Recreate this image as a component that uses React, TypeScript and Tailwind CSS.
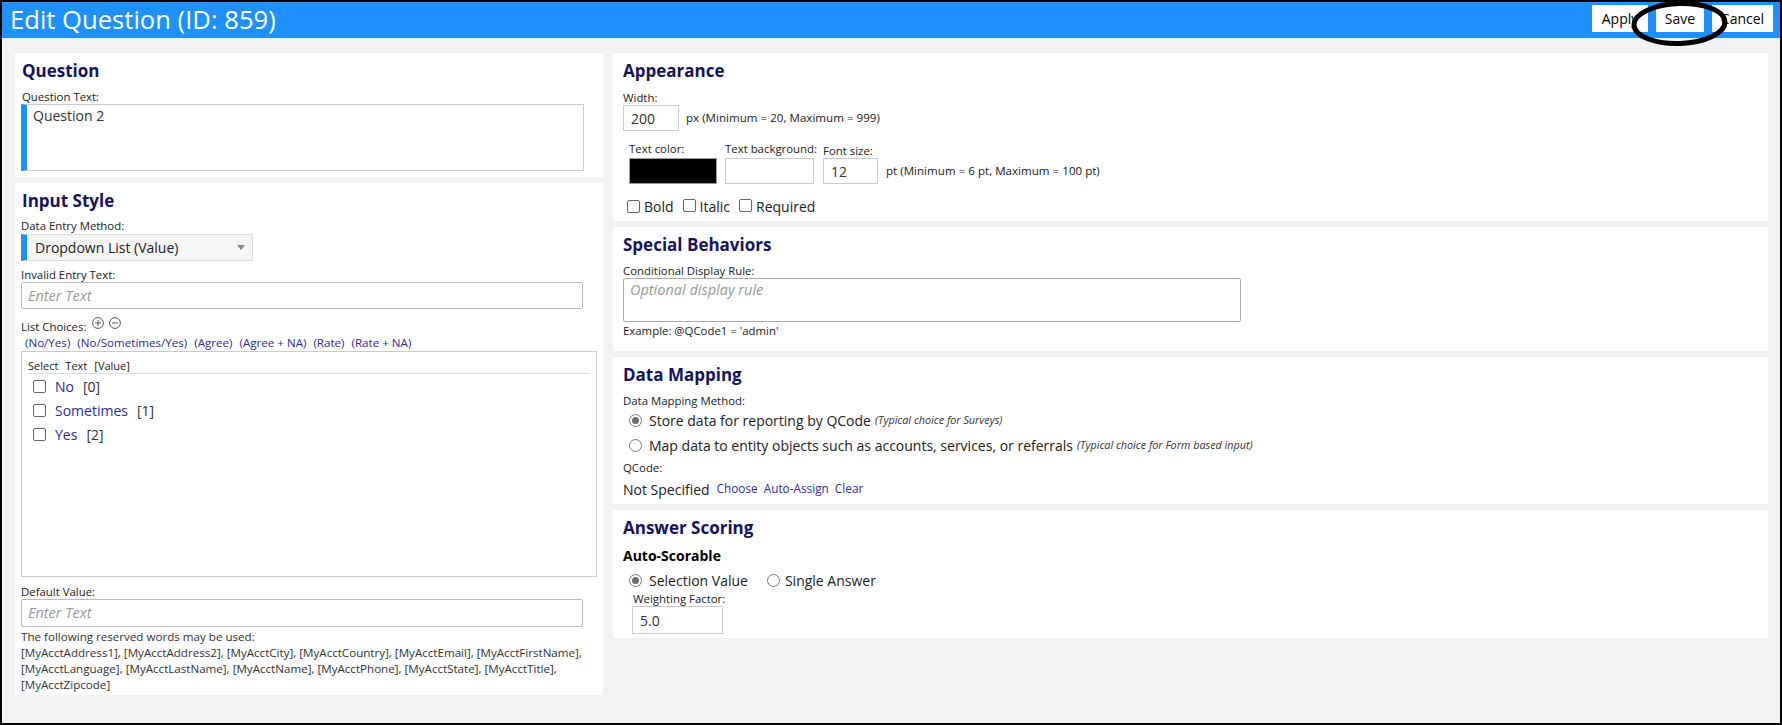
import React from "react";

const Label = ({ children, className = "" }: { children: React.ReactNode; className?: string }) => (
  <div className={`text-[11.4px] leading-[14px] text-[#222] whitespace-nowrap ${className}`}>{children}</div>
);

const Heading = ({ children }: { children: React.ReactNode }) => (
  <h2 className="text-[17px] leading-[24px] font-bold text-[#14135e]">{children}</h2>
);

const Checkbox = () => (
  <span className="inline-block w-[13px] h-[13px] shrink-0 border border-[#666] rounded-[2px] bg-white" />
);

const Radio = ({ checked = false }: { checked?: boolean }) => (
  <span className="w-[13px] h-[13px] shrink-0 rounded-full border border-[#7a7a7a] bg-white flex items-center justify-center">
    {checked && <span className="w-[7px] h-[7px] rounded-full bg-[#6f6f6f]" />}
  </span>
);

const CircleIcon = ({ plus }: { plus?: boolean }) => (
  <svg width="12" height="12" viewBox="0 0 12 12" className="shrink-0">
    <circle cx="6" cy="6" r="5.4" fill="none" stroke="#555" strokeWidth="1" />
    <line x1="3" y1="6" x2="9" y2="6" stroke="#555" strokeWidth="1" />
    {plus && <line x1="6" y1="3" x2="6" y2="9" stroke="#555" strokeWidth="1" />}
  </svg>
);

export default function App() {
  return (
    <div className="relative w-[1782px] h-[725px] border-2 border-black bg-[#f2f2f2] font-['Open_Sans',sans-serif] overflow-hidden flex flex-col">
      {/* Header */}
      <header className="h-[36px] shrink-0 bg-[#1e90ff] flex justify-between">
        <div className="pl-[8px] text-white text-[25.6px] leading-[36px]">Edit Question (ID: 859)</div>
        <div className="flex gap-[8px] pt-[3px] pr-[7px]">
          <button className="w-[56px] h-[27px] bg-white text-[14px] text-black">Apply</button>
          <button className="w-[48px] h-[27px] bg-white text-[14px] text-black">Save</button>
          <button className="w-[61px] h-[27px] bg-white text-[14px] text-black">Cancel</button>
        </div>
      </header>

      {/* Body */}
      <div className="flex gap-[10px] pl-[13px] pt-[15px]">
        {/* Left column */}
        <div className="w-[588px] flex flex-col gap-[6px]">
          <section className="bg-white pl-[6px] pt-[6px] pb-[6px]">
            <div className="pl-[1px]">
              <Heading>Question</Heading>
            </div>
            <Label className="mt-[7px] pl-[1px]">Question Text:</Label>
            <div className="w-[563px] h-[67px] border border-[#ccc] border-l-[6px] border-l-[#1e90ff] pl-[6px] pt-[1px] text-[14px] leading-[20px] text-[#333]">
              Question 2
            </div>
          </section>

          <section className="bg-white pl-[6px] pt-[6px] pb-[2px]">
            <div className="pl-[1px]">
              <Heading>Input Style</Heading>
            </div>
            <Label className="mt-[6px]">Data Entry Method:</Label>
            <div className="mt-[1px] w-[232px] h-[27px] bg-[#f5f5f5] border border-[#ddd] border-l-[6px] border-l-[#1e90ff] flex items-center justify-between pl-[8px] pr-[7px] text-[14px] text-[#222]">
              <span>Dropdown List (Value)</span>
              <span className="w-0 h-0 border-l-[4px] border-r-[4px] border-t-[5px] border-l-transparent border-r-transparent border-t-[#888]" />
            </div>

            <Label className="mt-[7px]">Invalid Entry Text:</Label>
            <div className="w-[562px] h-[27px] border border-[#bbb] rounded-[2px] pl-[6px] flex items-center text-[14.5px] italic text-[#9a9a9a]">
              Enter Text
            </div>

            <div className="mt-[7px] h-[18px] flex items-end">
              <span className="text-[11.4px] leading-[14px] text-[#222]">List Choices:</span>
              <span className="self-start mt-[1px] ml-[6px] flex gap-[5px]">
                <CircleIcon plus />
                <CircleIcon />
              </span>
            </div>
            <div className="mt-[2px] pl-[4px] flex gap-[7px] text-[11.6px] leading-[14px] text-[#2d2d96]">
              <span>(No/Yes)</span>
              <span>(No/Sometimes/Yes)</span>
              <span>(Agree)</span>
              <span>(Agree + NA)</span>
              <span>(Rate)</span>
              <span>(Rate + NA)</span>
            </div>

            <div className="mt-[1px] w-[576px] h-[226px] border border-[#ccc] bg-white">
              <div className="mx-[6px] pt-[7px] border-b border-[#ddd] flex gap-[7px] text-[11px] leading-[14px] text-[#222]">
                <span>Select</span>
                <span>Text</span>
                <span>[Value]</span>
              </div>
              {[
                ["No", "[0]"],
                ["Sometimes", "[1]"],
                ["Yes", "[2]"],
              ].map(([t, v]) => (
                <div key={t} className="h-[24px] flex items-center pl-[11px] text-[14px]">
                  <Checkbox />
                  <span className="ml-[9px] text-[#2d2d96]">{t}</span>
                  <span className="ml-[9px] text-[#333]">{v}</span>
                </div>
              ))}
            </div>

            <Label className="mt-[8px]">Default Value:</Label>
            <div className="w-[562px] h-[28px] border border-[#bbb] rounded-[2px] pl-[6px] flex items-center text-[14.5px] italic text-[#9a9a9a]">
              Enter Text
            </div>
            <div className="mt-[2px] text-[11.6px] leading-[16px] text-[#333] whitespace-nowrap">
              <div>The following reserved words may be used:</div>
              <div>[MyAcctAddress1], [MyAcctAddress2], [MyAcctCity], [MyAcctCountry], [MyAcctEmail], [MyAcctFirstName],</div>
              <div>[MyAcctLanguage], [MyAcctLastName], [MyAcctName], [MyAcctPhone], [MyAcctState], [MyAcctTitle],</div>
              <div>[MyAcctZipcode]</div>
            </div>
          </section>
        </div>

        {/* Right column */}
        <div className="w-[1155px] flex flex-col gap-[6px]">
          <section className="bg-white pl-[10px] pt-[6px] pb-[5px]">
            <Heading>Appearance</Heading>
            <Label className="mt-[8px]">Width:</Label>
            <div className="h-[26px] flex items-center">
              <div className="w-[56px] h-[26px] border border-[#ccc] pl-[7px] flex items-center text-[14px] text-[#333]">200</div>
              <span className="ml-[7px] text-[11.6px] text-[#222]">px (Minimum = 20, Maximum = 999)</span>
            </div>
            <div className="mt-[11px] pl-[6px] flex">
              <div className="w-[88px] flex flex-col">
                <Label className="mb-[2px]">Text color:</Label>
                <div className="h-[26px] bg-black border border-[#999]" />
              </div>
              <div className="ml-[8px] w-[89px] flex flex-col">
                <Label className="mb-[2px]">Text background:</Label>
                <div className="h-[26px] bg-white border border-[#ccc]" />
              </div>
              <div className="ml-[9px] flex flex-col">
                <Label className="pt-[2px]">Font size:</Label>
                <div className="flex items-center">
                  <div className="w-[55px] h-[26px] border border-[#ccc] pl-[7px] flex items-center text-[14px] text-[#333]">12</div>
                  <span className="ml-[8px] text-[11.6px] text-[#222]">pt (Minimum = 6 pt, Maximum = 100 pt)</span>
                </div>
              </div>
            </div>
            <div className="mt-[12px] h-[20px] pl-[4px] flex items-center text-[14px] text-[#222]">
              <Checkbox />
              <span className="ml-[4px]">Bold</span>
              <span className="ml-[9px]"><Checkbox /></span>
              <span className="ml-[4px]">Italic</span>
              <span className="ml-[9px]"><Checkbox /></span>
              <span className="ml-[4px]">Required</span>
            </div>
          </section>

          <section className="bg-white pl-[10px] pt-[6px] pb-[13px]">
            <Heading>Special Behaviors</Heading>
            <Label className="mt-[7px]">Conditional Display Rule:</Label>
            <div className="w-[618px] h-[44px] border border-[#aaa] rounded-[2px] pl-[6px] pt-[1px] text-[14.5px] leading-[20px] italic text-[#9a9a9a]">
              Optional display rule
            </div>
            <Label className="mt-[2px]">Example: @QCode1 = 'admin'</Label>
          </section>

          <section className="bg-white pl-[10px] pt-[6px] pb-[4px]">
            <Heading>Data Mapping</Heading>
            <Label className="mt-[7px]">Data Mapping Method:</Label>
            <div className="flex flex-col gap-[1px]">
              <div className="h-[24px] pl-[6px] flex items-center">
                <Radio checked />
                <span className="ml-[7px] text-[14px] text-[#222]">Store data for reporting by QCode</span>
                <span className="ml-[4px] text-[10.8px] italic text-[#333]">(Typical choice for Surveys)</span>
              </div>
              <div className="h-[24px] pl-[6px] flex items-center">
                <Radio />
                <span className="ml-[7px] text-[14px] text-[#222]">Map data to entity objects such as accounts, services, or referrals</span>
                <span className="ml-[4px] text-[10.8px] italic text-[#333]">(Typical choice for Form based input)</span>
              </div>
            </div>
            <Label className="mt-[4px]">QCode:</Label>
            <div className="mt-[3px] h-[22px] flex items-center">
              <span className="text-[14px] text-[#222]">Not Specified</span>
              <span className="ml-[7px] text-[11.8px] text-[#2d2d96]">Choose</span>
              <span className="ml-[6px] text-[11.8px] text-[#2d2d96]">Auto-Assign</span>
              <span className="ml-[6px] text-[11.8px] text-[#2d2d96]">Clear</span>
            </div>
          </section>

          <section className="bg-white pl-[10px] pt-[6px] pb-[4px]">
            <Heading>Answer Scoring</Heading>
            <div className="mt-[6px] text-[14px] leading-[20px] font-bold text-black">Auto-Scorable</div>
            <div className="mt-[4px] h-[20px] pl-[6px] flex items-center text-[14px] text-[#222]">
              <Radio checked />
              <span className="ml-[7px]">Selection Value</span>
              <span className="ml-[19px]"><Radio /></span>
              <span className="ml-[5px]">Single Answer</span>
            </div>
            <Label className="mt-[2px] pl-[10px]">Weighting Factor:</Label>
            <div className="ml-[9px] w-[91px] h-[28px] border border-[#ccc] pl-[7px] flex items-center text-[14px] text-[#333]">5.0</div>
          </section>
        </div>
      </div>

      {/* Annotation ellipse around Save */}
      <svg
        className="absolute left-[1629px] top-[-1px] pointer-events-none"
        width="97"
        height="46"
        viewBox="0 0 97 46"
      >
        <ellipse
          cx="48.5"
          cy="22.5"
          rx="45.5"
          ry="20"
          fill="none"
          stroke="black"
          strokeWidth="5"
          transform="rotate(-2 48.5 22.5)"
        />
      </svg>
    </div>
  );
}
